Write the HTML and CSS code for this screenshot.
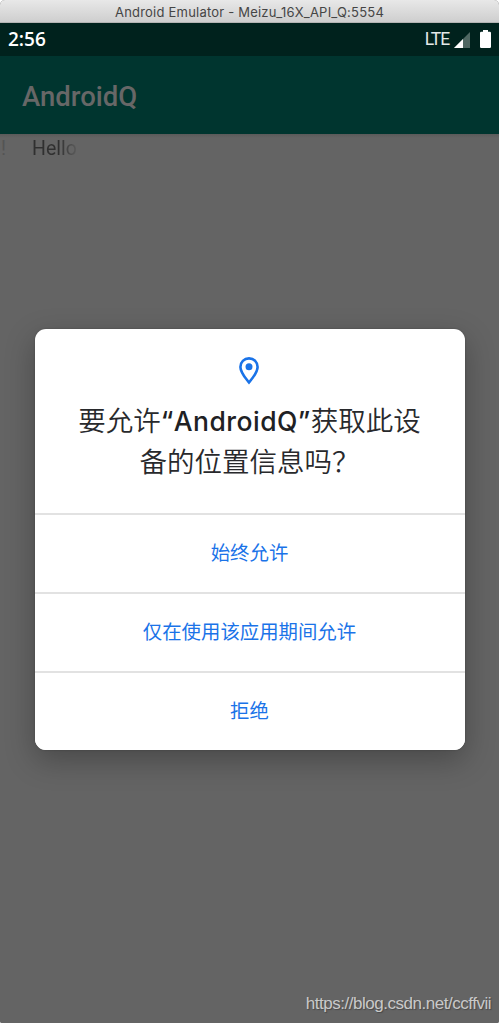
FILE: index.html
```html
<!DOCTYPE html>
<html lang="zh-CN">
<head>
<meta charset="utf-8">
<title>Android Emulator</title>
<link rel="stylesheet" href="styles.css">
</head>
<body>
<div class="window">
  <header class="titlebar"><span class="titlebar-text">Android Emulator - Meizu_16X_API_Q:5554</span></header>
  <div class="statusbar">
    <span class="clock">2:56</span>
    <div class="status-icons">
      <span class="lte">LTE</span>
      <svg class="signal" width="16" height="16" viewBox="0 0 16 16"><path d="M16 0V16H0Z" fill="#4f6762"/><path d="M9 7V16H0Z" fill="#fff"/></svg>
      <svg class="battery" width="11" height="18" viewBox="0 0 11 18"><path d="M3 0H8V1.8H9.8Q11 1.8 11 3V16.8Q11 18 9.8 18H1.2Q0 18 0 16.8V3Q0 1.8 1.2 1.8H3Z" fill="#fff"/></svg>
    </div>
  </div>
  <div class="appbar"><span class="app-title">AndroidQ</span></div>
  <main class="content">
    <div class="marquee"><span class="marquee-end">!</span><span class="marquee-text">Hello</span></div>
    <section class="dialog">
      <div class="dialog-head">
        <svg class="pin" width="20" height="28" viewBox="0 0 20 28"><path d="M10 1.4C5.1 1.4 1.4 5.1 1.4 9.9C1.4 15.5 6 20.4 10 25.5C14 20.4 18.6 15.5 18.6 9.9C18.6 5.1 14.9 1.4 10 1.4Z" fill="none" stroke="#1a73e8" stroke-width="2.6"/><circle cx="10" cy="9.8" r="3.5" fill="#1a73e8"/></svg>
        <h1 class="question"><span class="line">要允许<span class="latin">“AndroidQ”</span>获取此设</span><span class="line">备的位置信息吗？</span></h1>
      </div>
      <button class="choice">始终允许</button>
      <button class="choice">仅在使用该应用期间允许</button>
      <button class="choice">拒绝</button>
    </section>
    <footer class="watermark"><span class="watermark-text">https://blog.csdn.net/ccffvii</span></footer>
  </main>
</div>
</body>
</html>
```

FILE: styles.css
```css
* { box-sizing: border-box; }
body { margin: 0; background: #fff; }
.window {
  width: 499px;
  height: 1023px;
  display: flex;
  flex-direction: column;
  overflow: hidden;
  border-radius: 5px 5px 2px 2px;
  background: #646464;
  font-family: Roboto, "Noto Sans CJK SC", sans-serif;
}
.titlebar {
  height: 23px;
  flex: none;
  display: flex;
  justify-content: center;
  align-items: center;
  padding-top: 2px;
  background: linear-gradient(#e8e8e8, #cecece);
  border-bottom: 1px solid #b4b4b4;
  color: #454545;
  font: 13px Inter, sans-serif;
  letter-spacing: 0.21px;
  white-space: nowrap;
}
.statusbar {
  height: 33px;
  flex: none;
  display: flex;
  justify-content: space-between;
  align-items: center;
  padding: 0 8px 0 8px;
  background: #00221d;
  color: #fff;
}
.clock { font: 600 19px "Open Sans", sans-serif; margin-top: -1px; }
.status-icons { display: flex; align-items: center; }
.lte { font-size: 17.5px; line-height: 20px; letter-spacing: -1.1px; color: #e4e9e8; margin-top: -1px; }
.signal { margin: 0 10px 0 5px; }
.battery { margin-top: -1px; }
.appbar {
  height: 78px;
  flex: none;
  display: flex;
  align-items: center;
  padding: 3px 0 0 22px;
  background: #00352f;
  color: #676767;
}
.app-title { font-size: 27.5px; font-weight: 500; }
.content {
  flex: 1;
  display: flex;
  flex-direction: column;
  background: linear-gradient(#5a5a5a, #646464 4px);
}
.marquee {
  height: 195px;
  flex: none;
  display: flex;
  gap: 27px;
  padding: 3px 0 0 1px;
  font-size: 19.5px;
  line-height: 23px;
}
.marquee-end { width: 4px; color: #545454; }
.marquee-text {
  height: 23px;
  background: linear-gradient(90deg, #303030 60%, #5c5c5c);
  -webkit-background-clip: text;
  background-clip: text;
  color: transparent;
}
.dialog {
  width: 430px;
  height: 421px;
  flex: none;
  margin-left: 34.5px;
  border-radius: 11px;
  background: #fff;
  box-shadow: 0 10px 30px rgba(0, 0, 0, .28), 0 0 2px rgba(0, 0, 0, .25);
  overflow: hidden;
}
.dialog-head {
  height: 184px;
  display: flex;
  flex-direction: column;
  align-items: center;
  padding-top: 28px;
}
.pin { margin-right: 1px; }
.question {
  display: flex;
  flex-direction: column;
  align-items: center;
  margin: 14px 0 0;
  color: #28292c;
  font: 350 27.5px/41px "Noto Sans CJK SC", sans-serif;
  white-space: nowrap;
}
.line { height: 41px; }
.latin { font-family: Inter, sans-serif; font-weight: 500; font-size: 26.5px; letter-spacing: 0.48px; color: #202124; }
.choice {
  display: block;
  width: 100%;
  height: 79px;
  margin: 0;
  padding: 0 0 4px;
  border: 0;
  border-top: 2px solid #e2e2e2;
  background: #fff;
  color: #1a73e8;
  font: 400 19.4px/28px "Noto Sans CJK SC", sans-serif;
}
.watermark {
  margin-top: auto;
  display: flex;
  justify-content: flex-end;
  padding: 0 8px 9px 0;
  color: #c9c9c9;
  font: 17px/20px "Liberation Sans", sans-serif;
  letter-spacing: -0.48px;
  text-shadow: 1px 1px 1px #484848;
}
```
